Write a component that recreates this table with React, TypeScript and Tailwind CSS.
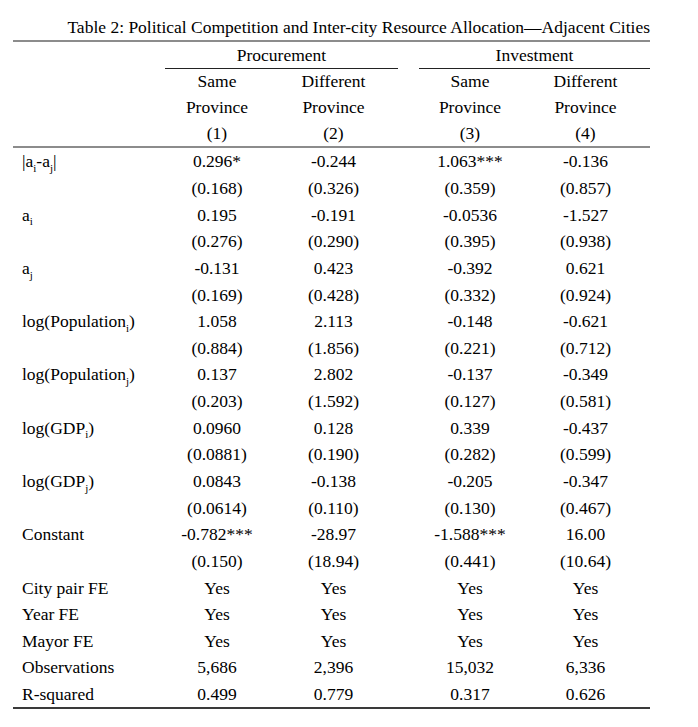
import React from "react";

const cols = "grid grid-cols-[152px_104px_129px_21px_102px_129px]";

type Row = { label: React.ReactNode; vals: string[] };

const sub = (t: string) => <sub className="text-[11px] align-[-2px] leading-none">{t}</sub>;

const rows: Row[] = [
  { label: <>|a{sub("i")}-a{sub("j")}|</>, vals: ["0.296*", "-0.244", "1.063***", "-0.136"] },
  { label: "", vals: ["(0.168)", "(0.326)", "(0.359)", "(0.857)"] },
  { label: <>a{sub("i")}</>, vals: ["0.195", "-0.191", "-0.0536", "-1.527"] },
  { label: "", vals: ["(0.276)", "(0.290)", "(0.395)", "(0.938)"] },
  { label: <>a{sub("j")}</>, vals: ["-0.131", "0.423", "-0.392", "0.621"] },
  { label: "", vals: ["(0.169)", "(0.428)", "(0.332)", "(0.924)"] },
  { label: <>log(Population{sub("i")})</>, vals: ["1.058", "2.113", "-0.148", "-0.621"] },
  { label: "", vals: ["(0.884)", "(1.856)", "(0.221)", "(0.712)"] },
  { label: <>log(Population{sub("j")})</>, vals: ["0.137", "2.802", "-0.137", "-0.349"] },
  { label: "", vals: ["(0.203)", "(1.592)", "(0.127)", "(0.581)"] },
  { label: <>log(GDP{sub("i")})</>, vals: ["0.0960", "0.128", "0.339", "-0.437"] },
  { label: "", vals: ["(0.0881)", "(0.190)", "(0.282)", "(0.599)"] },
  { label: <>log(GDP{sub("j")})</>, vals: ["0.0843", "-0.138", "-0.205", "-0.347"] },
  { label: "", vals: ["(0.0614)", "(0.110)", "(0.130)", "(0.467)"] },
  { label: "Constant", vals: ["-0.782***", "-28.97", "-1.588***", "16.00"] },
  { label: "", vals: ["(0.150)", "(18.94)", "(0.441)", "(10.64)"] },
  { label: "City pair FE", vals: ["Yes", "Yes", "Yes", "Yes"] },
  { label: "Year FE", vals: ["Yes", "Yes", "Yes", "Yes"] },
  { label: "Mayor FE", vals: ["Yes", "Yes", "Yes", "Yes"] },
  { label: "Observations", vals: ["5,686", "2,396", "15,032", "6,336"] },
  { label: "R-squared", vals: ["0.499", "0.779", "0.317", "0.626"] },
];

function HeadRow({ cells }: { cells: string[] }) {
  return (
    <div className={`${cols} h-[26px] items-center`}>
      <div />
      <div className="text-center">{cells[0]}</div>
      <div className="text-center">{cells[1]}</div>
      <div />
      <div className="text-center">{cells[2]}</div>
      <div className="text-center">{cells[3]}</div>
    </div>
  );
}

export default function App() {
  return (
    <div className="min-h-[727px] bg-white text-black font-['Liberation_Serif',serif] text-[17.5px] leading-[26px]">
      <div className="ml-[13px] w-[637px] pt-[14px]">
        <div className="h-[26px] text-right whitespace-nowrap">
          Table 2: Political Competition and Inter-city Resource Allocation—Adjacent Cities
        </div>
        <div className="h-[2px] bg-[#8c8c8c]" />
        <div className={`${cols} h-[26px]`}>
          <div />
          <div className="col-span-2 border-b border-[#222] text-center">Procurement</div>
          <div />
          <div className="col-span-2 border-b border-[#222] text-center">Investment</div>
        </div>
        <HeadRow cells={["Same", "Different", "Same", "Different"]} />
        <HeadRow cells={["Province", "Province", "Province", "Province"]} />
        <HeadRow cells={["(1)", "(2)", "(3)", "(4)"]} />
        <div className="h-[2px] bg-[#8c8c8c]" />
        {rows.map((r, i) => (
          <div key={i} className={`${cols} h-[26.65px] items-center`}>
            <div className="pl-[9px] whitespace-nowrap">{r.label}</div>
            <div className="text-center">{r.vals[0]}</div>
            <div className="text-center">{r.vals[1]}</div>
            <div />
            <div className="text-center">{r.vals[2]}</div>
            <div className="text-center">{r.vals[3]}</div>
          </div>
        ))}
        <div className="h-[2px] bg-[#3a3a3a]" />
      </div>
    </div>
  );
}
